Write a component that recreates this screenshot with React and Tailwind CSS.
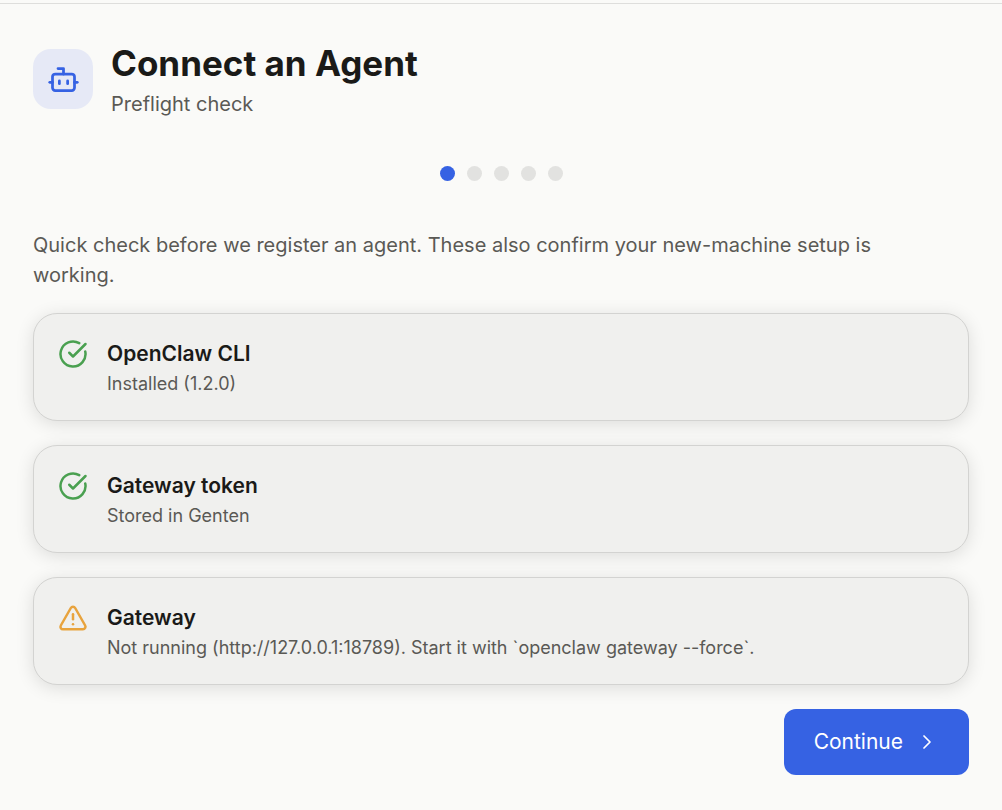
import { Bot, CircleCheckBig, TriangleAlert, ChevronRight } from 'lucide-react'

const STEPS = ['Preflight', 'Details', 'Workspace', 'Model', 'Finish']

const CHECKS = [
  { title: 'OpenClaw CLI', detail: 'Installed (1.2.0)', ok: true },
  { title: 'Gateway token', detail: 'Stored in Genten', ok: true },
  {
    title: 'Gateway',
    detail: 'Not running (http://127.0.0.1:18789). Start it with `openclaw gateway --force`.',
    ok: false,
  },
]

const CheckCard = ({ title, detail, ok }) => (
  <li className="flex items-start gap-[19px] rounded-3xl border border-[#d3d3d1] bg-[#f0f0ee] px-6 pt-[25px] pb-[21px] shadow-[0_3px_18px_rgba(0,0,0,0.12)]">
    {ok ? (
      <CircleCheckBig size={30} className="shrink-0 text-[#4aa050]" />
    ) : (
      <TriangleAlert size={30} className="shrink-0 text-[#e8a33d]" />
    )}
    <div className="min-w-0">
      <h2 className="text-[21px] leading-[30px] font-semibold text-[#1a1a18]">{title}</h2>
      <p className="text-[18px] leading-[30px] text-[#5a5955]">{detail}</p>
    </div>
  </li>
)

const App = () => {
  const current = 0

  return (
    <div className="min-h-screen bg-[#fafaf8] pt-[3px] font-['Inter',sans-serif]">
      <main className="border-t border-[#dededc] px-[33px] pt-[35px] pb-8">
        <header className="flex items-center gap-[18px]">
          <div className="flex size-[60px] shrink-0 items-center justify-center rounded-[18px] bg-[#e6e9f6]">
            <Bot size={33} className="text-[#3662e3]" />
          </div>
          <div>
            <h1 className="text-[35px] leading-[48px] font-bold text-[#1a1a18]">Connect an Agent</h1>
            <p className="mt-0.5 text-[20px] leading-[30px] text-[#5a5955]">Preflight check</p>
          </div>
        </header>

        <ol className="mt-[47px] flex justify-center gap-3">
          {STEPS.map((step, i) => (
            <li
              key={step}
              className={`size-[15px] rounded-full ${i === current ? 'bg-[#3662e3]' : 'bg-[#e2e2e0]'}`}
            />
          ))}
        </ol>

        <p className="mt-[49px] pr-6 text-[20px] leading-[30px] text-[#5a5955]">
          Quick check before we register an agent. These also confirm your new-machine setup is working.
        </p>

        <ul className="mt-[23px] space-y-6">
          {CHECKS.map((check) => (
            <CheckCard key={check.title} {...check} />
          ))}
        </ul>

        <div className="mt-6 flex justify-end">
          <button
            type="button"
            className="flex h-[66px] items-center gap-3 rounded-xl bg-[#3662e3] px-[30px] text-[21px] text-white"
          >
            Continue
            <ChevronRight size={24} strokeWidth={1.75} />
          </button>
        </div>
      </main>
    </div>
  )
}

export default App
